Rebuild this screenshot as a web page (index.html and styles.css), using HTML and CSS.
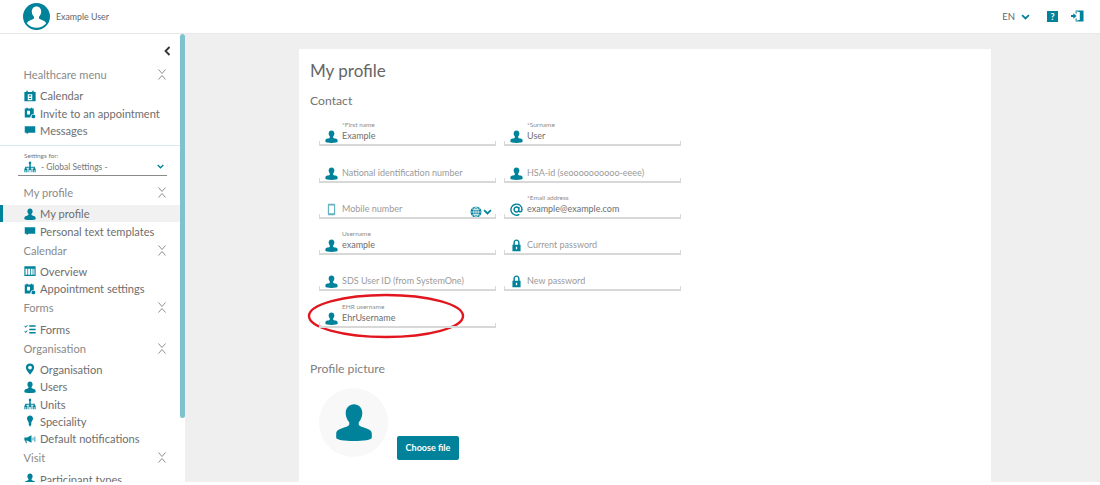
FILE: index.html
```html
<!DOCTYPE html>
<html lang="en">
<head>
<meta charset="utf-8">
<title>My profile</title>
<link rel="stylesheet" href="styles.css">
</head>
<body>
<svg class="defs" width="0" height="0" aria-hidden="true">
  <symbol id="i-user" viewBox="0 0 16 16"><path d="M8 .5c2 0 3.500 1.500 3.500 3.800 0 1.700-.8 3-1.500 3.800v1c0 .6 1.500 1.100 3 1.500 1.500.5 2.500 1.100 2.500 2.300v1.700c0 .8-3.500 1.400-7.500 1.400s-7.500-.6-7.500-1.400v-1.700c0-1.200 1-1.800 2.500-2.300 1.500-.4 3-.9 3-1.500v-1C5.300 7.300 4.500 6 4.500 4.300 4.500 2 6 .5 8 .5z"/></symbol>
  <symbol id="i-msg" viewBox="0 0 16 16"><path d="M1 3h14v8.500H6L3.500 13.500V11.500H1z"/></symbol>
  <symbol id="i-cal" viewBox="0 0 16 16"><path fill-rule="evenodd" d="M.5 2.500h2.500V1h2v1.500h6V1h2v1.500h2.500V15H.5zM5 5.500v8h6v-8zM6.500 7h3v1.500h-3zM6.500 10.500h3V12h-3z"/></symbol>
  <symbol id="i-invite" viewBox="0 0 16 16"><path fill-rule="evenodd" d="M1 2h2V1h2v1h4V1h2v1h2v7.500A4 4 0 0 0 8.500 14H1zM4 5v5h4V5z"/><circle cx="12.500" cy="12.500" r="2.500"/></symbol>
  <symbol id="i-units" viewBox="0 0 16 16"><path d="M6.500 1h3v3h-3zM7 4h2v3.500h5.500V10h-1.500V9H9v1H7V9H3v1H1.500V7.500H7zM.5 10h4v5h-1.500v-3h-1v3H.5zM6 10h4v5H9v-3H7v3H6zM11.500 10h4v5H14v-3h-1v3h-1.500z"/></symbol>
  <symbol id="i-over" viewBox="0 0 16 16"><path fill-rule="evenodd" d="M.5 1.500h15v13H.5zM2 5v8h2.500V5zM5.500 5v8H8V5zM9 5v8h2.500V5zM12.500 5v8H14V5z"/></symbol>
  <symbol id="i-forms" viewBox="0 0 16 16"><path d="M7 3h8.500v2H7zM7 7.500h8.500v2H7zM7 12h8.500v2H7zM1.200 3.500l1 1 2-2 .8.800L2.200 6.200.4 4.300zM1.200 10.500l1 1 2-2 .8.800L2.200 13.200.4 11.300z"/></symbol>
  <symbol id="i-pin" viewBox="0 0 16 16"><path fill-rule="evenodd" d="M8 .5a5.500 5.500 0 0 1 5.500 5.500c0 3.500-3.500 6.500-5.500 9.500C6 12.500 2.500 9.500 2.500 6A5.500 5.500 0 0 1 8 .5zM8 3.500a2.500 2.500 0 1 0 0 5 2.500 2.500 0 0 0 0-5z"/></symbol>
  <symbol id="i-bulb" viewBox="0 0 16 16"><path d="M8 .5c2.500 0 4 1.800 4 4 0 2-1.500 3.500-2.300 5.500v3L8 15.500 6.300 13v-3C5.500 8 4 6.500 4 4.500c0-2.200 1.500-4 4-4z"/></symbol>
  <symbol id="i-horn" viewBox="0 0 16 16"><path d="M.5 6H4l6-3v10L4 10H3l1 3.500H2.500L1.500 10h-1zM11.500 6v4h1V6zM14 4.500v7h1v-7z"/></symbol>
  <symbol id="i-mobile" viewBox="0 0 16 16"><path fill-rule="evenodd" d="M4.500 1h7a1 1 0 0 1 1 1v12a1 1 0 0 1-1 1h-7a1 1 0 0 1-1-1V2a1 1 0 0 1 1-1zM5 3v9.500h6V3z"/></symbol>
  <symbol id="i-at" viewBox="0 0 16 16"><path fill="none" stroke="currentColor" stroke-width="1.700" d="M11 8a3 3 0 1 1-6 0 3 3 0 0 1 6 0zM11 5v4.500c0 2 3.800 2 3.800-1.500A6.800 6.800 0 1 0 11.500 14"/></symbol>
  <symbol id="i-lock" viewBox="0 0 16 16"><path fill-rule="evenodd" d="M8 .5c2.300 0 3.800 1.700 3.800 4V7H13v8H3V7h1.200V4.500C4.200 2.200 5.700.5 8 .5zM8 2.300c-1.200 0-2 .9-2 2.200V7h4V4.500c0-1.300-.8-2.200-2-2.200zM7.200 9.500v3h1.600v-3z"/></symbol>
  <symbol id="i-fold" viewBox="0 0 10 11"><path fill="none" stroke="#8f8f8f" stroke-width="1" d="M1.500 .5 5 4.500 8.500 .5M1.500 10.500 5 6.500 8.500 10.500"/></symbol>
  <symbol id="i-chev" viewBox="0 0 10 7"><path fill="none" stroke="currentColor" stroke-width="2" d="M1 1.200 5 5.200 9 1.200"/></symbol>
</svg>

<header class="topbar">
  <div class="account">
    <svg class="avatar" viewBox="0 0 27 27"><circle cx="13.500" cy="13.500" r="13.500" fill="#00829b"/><path fill="#fff" d="M13.500 3.500c3 0 4.700 2.200 4.700 5 0 2.200-1 4.200-2.200 5.300v1.500c0 .8 1.800 1.400 4 2.100 1.700.6 2.800 1.500 3.100 3.100a13 13 0 0 1-19.200 0c.3-1.600 1.400-2.500 3.100-3.100 2.200-.7 4-1.300 4-2.100v-1.500c-1.200-1.100-2.200-3.100-2.200-5.300 0-2.800 1.700-5 4.700-5z"/></svg>
    <span class="account-name">Example User</span>
  </div>
  <div class="tools">
    <span class="lang">EN</span>
    <svg class="lang-chev"><use href="#i-chev"/></svg>
    <span class="help">?</span>
    <svg class="logout" viewBox="0 0 14 14"><path fill="#00829b" d="M5 1h8.500v12H5v-3.500h1V12l3.500-1V3L6 2v2.500H5zM0 6h2.500V4l3.500 3-3.500 3V8H0z"/></svg>
  </div>
</header>

<div class="shell">
  <aside class="sidebar">
    <nav class="nav">
      <div class="collapse"><svg class="collapse-icon" viewBox="0 0 7 10"><path fill="none" stroke="#333" stroke-width="1.800" d="M5.500 1 1.500 5l4 4"/></svg></div>

      <div class="nav-head"><span>Healthcare menu</span><svg class="fold"><use href="#i-fold"/></svg></div>
      <a class="nav-item"><svg class="ico"><use href="#i-cal"/></svg>Calendar</a>
      <a class="nav-item"><svg class="ico"><use href="#i-invite"/></svg>Invite to an appointment</a>
      <a class="nav-item"><svg class="ico"><use href="#i-msg"/></svg>Messages</a>

      <div class="settings">
        <div class="settings-label">Settings for:</div>
        <div class="settings-select"><svg class="ico-s"><use href="#i-units"/></svg><span class="settings-value">- Global Settings -</span><svg class="settings-chev"><use href="#i-chev"/></svg></div>
      </div>

      <div class="nav-head"><span>My profile</span><svg class="fold"><use href="#i-fold"/></svg></div>
      <a class="nav-item active"><svg class="ico"><use href="#i-user"/></svg>My profile</a>
      <a class="nav-item"><svg class="ico"><use href="#i-msg"/></svg>Personal text templates</a>

      <div class="nav-head"><span>Calendar</span><svg class="fold"><use href="#i-fold"/></svg></div>
      <a class="nav-item"><svg class="ico"><use href="#i-over"/></svg>Overview</a>
      <a class="nav-item"><svg class="ico"><use href="#i-invite"/></svg>Appointment settings</a>

      <div class="nav-head"><span>Forms</span><svg class="fold"><use href="#i-fold"/></svg></div>
      <a class="nav-item"><svg class="ico"><use href="#i-forms"/></svg>Forms</a>

      <div class="nav-head"><span>Organisation</span><svg class="fold"><use href="#i-fold"/></svg></div>
      <a class="nav-item"><svg class="ico"><use href="#i-pin"/></svg>Organisation</a>
      <a class="nav-item"><svg class="ico"><use href="#i-user"/></svg>Users</a>
      <a class="nav-item"><svg class="ico"><use href="#i-units"/></svg>Units</a>
      <a class="nav-item"><svg class="ico"><use href="#i-bulb"/></svg>Speciality</a>
      <a class="nav-item"><svg class="ico"><use href="#i-horn"/></svg>Default notifications</a>

      <div class="nav-head"><span>Visit</span><svg class="fold"><use href="#i-fold"/></svg></div>
      <a class="nav-item"><svg class="ico"><use href="#i-user"/></svg>Participant types</a>
    </nav>
    <div class="scrollbar"></div>
  </aside>

  <main class="main">
    <section class="card">
      <h1 class="title">My profile</h1>
      <h2 class="section">Contact</h2>
      <div class="form-grid">
        <div class="field"><svg class="f-ico"><use href="#i-user"/></svg><div class="f-body"><label class="f-label">*First name</label><span class="f-value">Example</span></div></div>
        <div class="field"><svg class="f-ico"><use href="#i-user"/></svg><div class="f-body"><label class="f-label">*Surname</label><span class="f-value">User</span></div></div>
        <div class="field"><svg class="f-ico"><use href="#i-user"/></svg><div class="f-body"><label class="f-label"></label><span class="f-hint">National identification number</span></div></div>
        <div class="field"><svg class="f-ico"><use href="#i-user"/></svg><div class="f-body"><label class="f-label"></label><span class="f-hint">HSA-id (seoooooooooo-eeee)</span></div></div>
        <div class="field"><svg class="f-ico f-ico-light"><use href="#i-mobile"/></svg><div class="f-body"><label class="f-label"></label><span class="f-hint">Mobile number</span></div>
          <div class="phone-tools"><svg class="globe" viewBox="0 0 12 12"><circle cx="6" cy="6" r="5.500" fill="#00829b"/><path fill="none" stroke="#fff" stroke-width=".7" d="M.5 6h11M6 .5v11M2 2.800c2.500 1 5.500 1 8 0M2 9.200c2.500-1 5.500-1 8 0M6 .5C3 3 3 9 6 11.500 9 9 9 3 6 .5z"/></svg><svg class="phone-chev"><use href="#i-chev"/></svg></div>
        </div>
        <div class="field"><svg class="f-ico"><use href="#i-at"/></svg><div class="f-body"><label class="f-label">*Email address</label><span class="f-value">example@example.com</span></div></div>
        <div class="field"><svg class="f-ico"><use href="#i-user"/></svg><div class="f-body"><label class="f-label">Username</label><span class="f-value">example</span></div></div>
        <div class="field"><svg class="f-ico"><use href="#i-lock"/></svg><div class="f-body"><label class="f-label"></label><span class="f-hint">Current password</span></div></div>
        <div class="field"><svg class="f-ico"><use href="#i-user"/></svg><div class="f-body"><label class="f-label"></label><span class="f-hint">SDS User ID (from SystemOne)</span></div></div>
        <div class="field"><svg class="f-ico"><use href="#i-lock"/></svg><div class="f-body"><label class="f-label"></label><span class="f-hint">New password</span></div></div>
        <div class="field field-ehr"><svg class="f-ico"><use href="#i-user"/></svg><div class="f-body"><label class="f-label">EHR username</label><span class="f-value">EhrUsername</span></div>
          <svg class="ring" viewBox="0 0 158 46"><ellipse cx="79" cy="23" rx="77" ry="21" fill="none" stroke="#e2161f" stroke-width="2.400"/></svg>
        </div>
      </div>
      <h2 class="section section-pic">Profile picture</h2>
      <div class="picture-row">
        <div class="picture"><svg class="picture-user"><use href="#i-user"/></svg></div>
        <button class="choose" type="button">Choose file</button>
      </div>
    </section>
  </main>
</div>
</body>
</html>
```
FILE: styles.css
```css
* { box-sizing: border-box; }
html, body { margin: 0; height: 100%; overflow: hidden; }
body { font-family: Lato, "Open Sans", sans-serif; color: #6e6e6e; background: #fff; }
.defs { display: block; height: 0; }
.topbar { height: 34px; display: flex; align-items: center; justify-content: space-between; background: #fff; border-bottom: 1px solid #e8e8e8; padding: 0 16px 1px 23px; }
.account { display: flex; align-items: center; gap: 6px; }
.avatar { width: 27px; height: 27px; display: block; }
.account-name { font-size: 8.800px; color: #666; }
.tools { display: flex; align-items: center; }
.lang { font-size: 9.500px; color: #666; }
.lang-chev { width: 9px; height: 6px; margin: 1px 17px 0 6px; color: #00829b; }
.help { width: 11px; height: 11px; background: #00829b; color: #fff; font-size: 9px; font-weight: 700; line-height: 11px; text-align: center; margin-right: 13px; }
.logout { width: 13px; height: 14px; display: block; }

.shell { display: flex; height: 448px; background: #fff; }
.sidebar { width: 185px; flex: none; position: relative; overflow: hidden; background: #fff; }
.nav { width: 180px; }
.collapse { height: 30px; display: flex; justify-content: flex-end; align-items: center; padding: 4px 9px 0 0; }
.collapse-icon { width: 7px; height: 10px; }
.nav-head { height: 23px; display: flex; align-items: center; justify-content: space-between; padding: 0 13px 2px 23.500px; font-size: 11.100px; color: #8a8a8a; }
.fold { width: 10px; height: 11px; }
.nav-item { height: 17.350px; display: flex; align-items: center; gap: 4.500px; padding-left: 23.500px; font-size: 11.100px; color: #6e6e6e; white-space: nowrap; }
.nav-item.active { background: #f1f1f1; border-left: 3px solid #00829b; padding-left: 20.500px; }
.ico { width: 12px; height: 12px; color: #00829b; fill: #00829b; flex: none; }
.settings { margin-top: 6px; border-top: 1px solid #d9ecef; padding: 5px 13px 0 18px; height: 37px; }
.settings-label { font-size: 6.500px; line-height: 9px; padding-left: 6px; color: #777; }
.settings-select { height: 16px; display: flex; align-items: center; border-bottom: 1px solid #8a8a8a; padding: 0 3px 2px 6px; }
.ico-s { width: 12px; height: 12px; color: #00829b; fill: #00829b; flex: none; margin-right: 5px; }
.settings-value { font-size: 8.500px; color: #777; flex: 1; }
.settings-chev { width: 7px; height: 5px; color: #00829b; }
.scrollbar { position: absolute; top: 0; right: 0; width: 5px; height: 384px; border-radius: 3px; background: #7fc1cd; }

.main { flex: 1; background: #efefef; padding: 15px 109px 0 114px; overflow: hidden; }
.card { background: #fff; height: 433px; padding: 10px 12px 0 11px; }
.title { margin: 0; font-size: 17px; line-height: 24px; font-weight: 400; color: #666; }
.section { margin: 9px 0 0; font-size: 12.200px; line-height: 17px; font-weight: 400; color: #737373; }
.form-grid { margin: 1px 0 0 9px; display: grid; grid-template-columns: 177px 177px; column-gap: 8px; row-gap: 0; }
.field { height: 36.300px; display: flex; align-items: flex-end; padding: 0 0 4px 6px; position: relative; }
.field::after { content: ""; position: absolute; left: 0; right: 0; bottom: 0; height: 3px; border: 1px solid #d8d8d8; border-top: 0; border-bottom-width: 2px; }
.f-ico { width: 13px; height: 13px; color: #00829b; fill: #00829b; margin: 0 4px -1px 0; flex: none; }
.f-ico-light { opacity: .6; }
.f-body { display: flex; flex-direction: column; }
.f-label { font-size: 6.500px; line-height: 7px; height: 8px; color: #8c8c8c; }
.f-value { font-size: 9px; line-height: 13px; color: #6e6e6e; }
.f-hint { font-size: 9px; line-height: 13px; color: #9a9a9a; }
.phone-tools { position: absolute; right: 4px; bottom: 1px; display: flex; align-items: center; gap: 1px; }
.globe { width: 12px; height: 12px; }
.phone-chev { width: 9px; height: 6px; color: #00829b; }
.ring { position: absolute; left: -12px; top: 2px; width: 158px; height: 46px; }
.section-pic { margin-top: 32.500px; color: #808080; }
.picture-row { display: flex; align-items: flex-end; margin: 10.500px 0 0 9px; gap: 9px; }
.picture { width: 69px; height: 69px; border-radius: 50%; background: #f8f8f8; display: flex; align-items: center; justify-content: center; }
.picture-user { width: 38px; height: 38px; color: #00829b; fill: #00829b; }
.choose { width: 62px; height: 24px; margin-bottom: -3px; border: 0; border-radius: 2px; background: #00829b; color: #fff; font: 700 9px Lato, sans-serif; padding: 0; }
```
